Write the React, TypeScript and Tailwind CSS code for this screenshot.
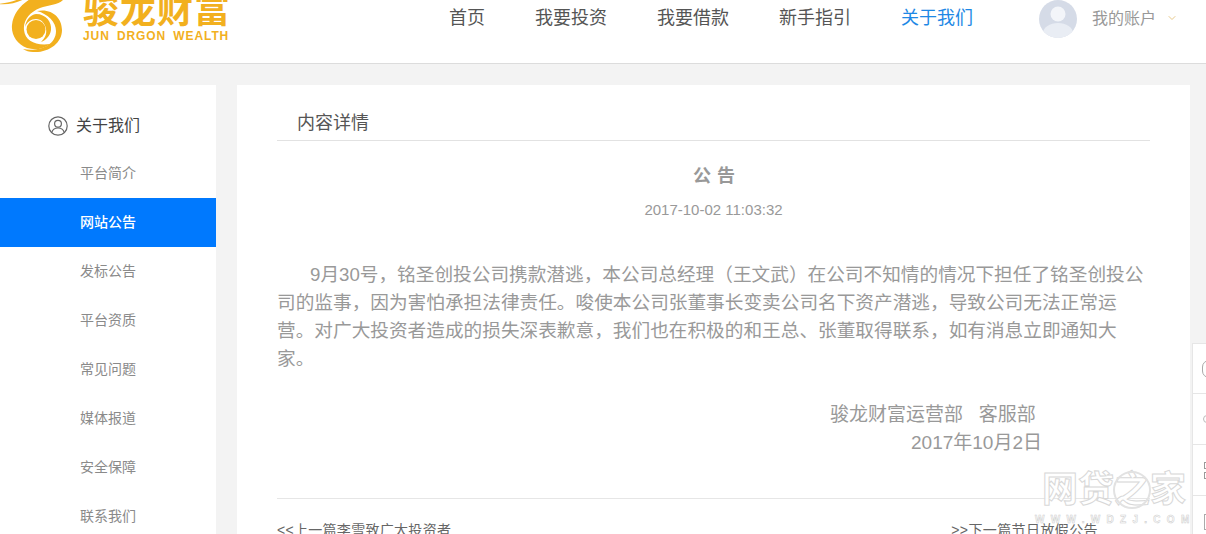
import React from 'react';
import { ChevronDown } from 'lucide-react';

const CJK = 'font-["Liberation_Sans","Noto_Sans_CJK_SC",sans-serif]';

const NAV = [
  { label: '首页', active: false },
  { label: '我要投资', active: false },
  { label: '我要借款', active: false },
  { label: '新手指引', active: false },
  { label: '关于我们', active: true },
];

const SIDE = ['平台简介', '网站公告', '发标公告', '平台资质', '常见问题', '媒体报道', '安全保障', '联系我们'];

const Logo = () => (
  <svg width="80" height="60" viewBox="0 0 80 60" className="shrink-0">
    {/* left swoosh */}
    <path d="M-2 4 C8 3 15 1 21 -2 L26 -2 C18 3 8 5 -2 4Z" fill="#f2b01e" />
    {/* stem of the 6, sweeping round the left */}
    <path d="M63 0 C58 5 48 5 40 8 C30 12 23 20 24 30 C25 41 36 46 50 44 C42 50 34 50 27 48 C17 44 11 35 12 25 C13 14 21 4 32 -2 L62 -2Z" fill="#f2b01e" />
    {/* outer right arc */}
    <path d="M37 11 C52 8 62 18 62 30 C62 43 49 53 33 52 C29 52 26 51 23 49 C38 52 56 46 56 31 C56 22 48 14 37 11Z" fill="#f2b01e" />
    <circle cx="36" cy="29.5" r="9.5" fill="#f2b01e" />
    {/* inner ring */}
    <path d="M36 14 C46 14 52 22 51 30 C50 36 46 40 41 42 C45 38 47 34 46 29 C45 23 41 19 36 19 C31 19 27 22 25 27 C26 20 30 15 36 14Z" fill="#f2b01e" />
  </svg>
);

const Avatar = () => (
  <svg width="38" height="38" viewBox="0 0 38 38">
    <defs>
      <clipPath id="av">
        <circle cx="19" cy="19" r="19" />
      </clipPath>
    </defs>
    <g clipPath="url(#av)">
      <rect width="38" height="38" fill="#d5dbe7" />
      <circle cx="19" cy="14" r="7.5" fill="#f3f5f9" />
      <ellipse cx="19" cy="33" rx="15" ry="10" fill="#e9edf4" />
    </g>
  </svg>
);

const UserRing = () => (
  <svg width="20" height="20" viewBox="0 0 20 20" fill="none" stroke="#666" strokeWidth="1.2">
    <circle cx="10" cy="10" r="9.2" />
    <circle cx="10" cy="7.8" r="3.4" />
    <path d="M3.8 16.4 C4.6 13.4 7 12 10 12 C13 12 15.4 13.4 16.2 16.4" />
  </svg>
);

export default function App() {
  return (
    <div className={`relative h-[534px] w-[1206px] overflow-hidden bg-[#f3f3f3] ${CJK}`}>
      {/* Header */}
      <header className="relative flex h-[64px] items-start overflow-hidden border-b border-[#dcdcdc] bg-white">
        <div className="flex w-[449px] shrink-0 items-start">
          <Logo />
          <div className="ml-[3px] mt-[-14px] w-[150px] text-[#f2b01e]">
            <div className="text-[36px] font-bold leading-[50px] tracking-[1px] whitespace-nowrap">骏龙财富</div>
            <div className="mt-[-7px] text-[12px] font-bold leading-[14px] tracking-[0.9px] [word-spacing:3px] whitespace-nowrap">JUN DRGON WEALTH</div>
          </div>
        </div>
        <nav className="flex gap-[50px] pt-[5px] text-[18px] leading-[26px] text-[#555]">
          {NAV.map((item) => (
            <span key={item.label} className={item.active ? 'text-[#1e88e5]' : ''}>{item.label}</span>
          ))}
        </nav>
        <div className="ml-[66px] flex items-center">
          <Avatar />
          <span className="ml-[15px] text-[16px] leading-[36px] text-[#999]">我的账户</span>
          <ChevronDown className="ml-[10px] mt-[-2px] h-[12px] w-[12px] text-[#e8c98a]" />
        </div>
      </header>

      <div className="flex items-start gap-[21px] pt-[21px]">
        {/* Sidebar */}
        <aside className="h-[460px] w-[216px] shrink-0 bg-white pt-[21px]">
          <div className="flex h-[40px] items-center gap-[8px] pl-[48px] text-[16px] text-[#444]">
            <UserRing />
            <span>关于我们</span>
          </div>
          <ul className="mt-[3px]">
            {SIDE.map((s, i) => (
              <li
                key={s}
                className={
                  i === 1
                    ? 'flex h-[49px] items-center bg-[#0079fe] pl-[80px] text-[14px] font-medium text-white'
                    : 'flex h-[49px] items-center pl-[80px] text-[14px] text-[#8a8a8a]'
                }
              >
                {s}
              </li>
            ))}
          </ul>
        </aside>

        {/* Content */}
        <main className="h-[460px] w-[953px] shrink-0 bg-white px-[40px] pt-[24px]">
          <div className="h-[32px] border-b border-[#e2e2e2] pl-[20px] text-[18px] leading-[28px] text-[#555]">内容详情</div>
          <h1 className="mt-[20px] pl-[7px] text-center text-[18px] font-bold leading-[30px] tracking-[6px] text-[#999]">公告</h1>
          <p className="mt-[9px] text-center text-[15px] leading-[20px] text-[#999]">2017-10-02 11:03:32</p>
          <p className="mt-[41px] w-[873px] indent-[33px] text-[18.67px] leading-[28px] text-[#999]">
            9月30号，铭圣创投公司携款潜逃，本公司总经理（王文武）在公司不知情的情况下担任了铭圣创投公司的监事，因为害怕承担法律责任。唆使本公司张董事长变卖公司名下资产潜逃，导致公司无法正常运营。对广大投资者造成的损失深表歉意，我们也在积极的和王总、张董取得联系，如有消息立即通知大家。
          </p>
          <div className="mt-[28px] pl-[553px] text-[19px] leading-[28px] whitespace-pre text-[#999]">骏龙财富运营部   客服部</div>
          <div className="pl-[634px] text-[19px] leading-[28px] text-[#999]">2017年10月2日</div>
          <div className="mt-[41px] flex justify-between border-t border-[#e6e6e6] pt-[21px] text-[14px] leading-[20px] text-[#666]">
            <span className="tracking-[0.3px]">&lt;&lt;上一篇李雪致广大投资者</span>
            <span className="mr-[52px] tracking-[0.4px]">&gt;&gt;下一篇节日放假公告</span>
          </div>
        </main>
      </div>

      {/* Floating tool rail, cut off by the window */}
      <div className="absolute left-[1192px] top-[343px] w-[40px] border border-[#e6e6e6] bg-white">
        <div className="flex h-[50px] items-center border-b border-[#e6e6e6] pl-[9px]">
          <div className="h-[18px] w-[14px] rounded-[7px] border border-[#aaa]" />
        </div>
        <div className="flex h-[51px] items-center border-b border-[#e6e6e6] pl-[10px]">
          <div className="h-[8px] w-[14px] rounded-[4px] border border-[#bbb]" />
        </div>
        <div className="flex h-[51px] items-center border-b border-[#e6e6e6] pl-[11px]">
          <div className="grid grid-cols-1 gap-[3px]">
            <div className="h-[7px] w-[7px] border border-[#999]" />
            <div className="h-[7px] w-[7px] border border-[#999]" />
          </div>
        </div>
        <div className="flex h-[51px] items-center pl-[11px]">
          <div className="h-[16px] w-[14px] border border-[#aaa]" />
        </div>
      </div>

      {/* Watermark */}
      <div className="absolute left-[1035px] top-[469px] w-[152px] select-none text-center text-white/90 [-webkit-text-stroke:1px_#d8d8d8]">
        <div className="flex justify-center pl-[6px] text-[36px] font-bold leading-[42px] whitespace-nowrap">
          <span>网贷</span>
          <span className="relative">
            之
            <svg width="40" height="40" viewBox="0 0 40 40" fill="none" className="absolute left-[-2px] top-[1px]">
              <circle cx="20" cy="20" r="18" stroke="#e2e2e2" strokeWidth="2" />
            </svg>
          </span>
          <span>家</span>
        </div>
        <div className="mt-[3px] text-[10px] font-bold leading-[12px] tracking-[6.3px] whitespace-nowrap [-webkit-text-stroke:0.5px_#ccc]">WWW.WDZJ.COM</div>
      </div>
    </div>
  );
}
